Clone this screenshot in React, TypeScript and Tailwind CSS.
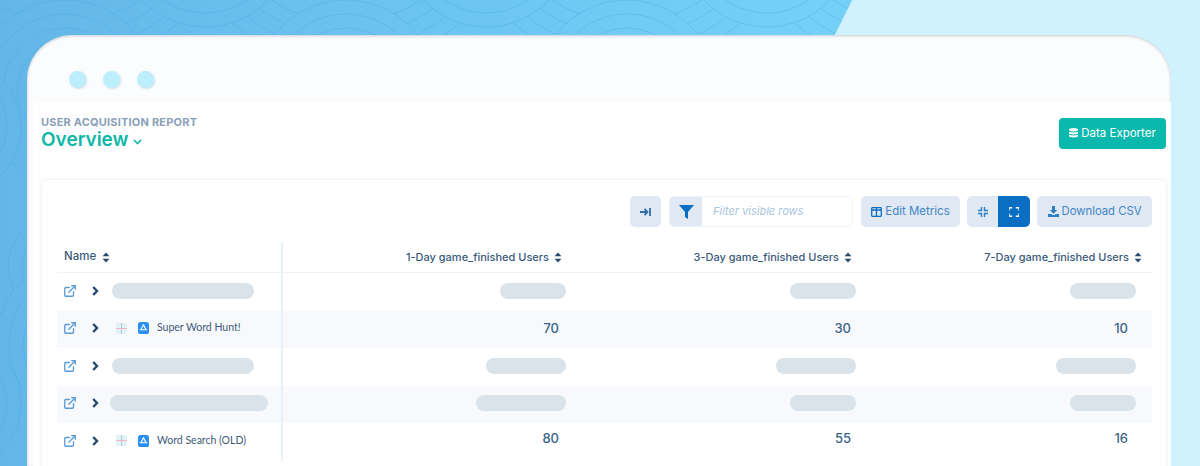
import React from "react";
import { ExternalLink } from "lucide-react";

const mont = "font-['Inter','Liberation_Sans',sans-serif]";

function Sort() {
  return (
    <svg width="8" height="11" viewBox="0 0 8 11" fill="#27496d">
      <path d="M4 0.5 L7.5 4.3 H0.5 Z" />
      <path d="M4 10.5 L7.5 6.7 H0.5 Z" />
    </svg>
  );
}

const ringSets: [number, number, number[]][] = [
  [65, -110, [175, 161, 147, 133]],
  [346, -110, [175, 161, 147, 133]],
  [627, -110, [175, 161, 147, 133]],
  [908, -110, [175, 161, 147, 133]],
  [205, -60, [87, 73, 59]],
  [486, -60, [87, 73, 59]],
  [767, -60, [87, 73, 59]],
  [65, 90, [90, 76, 62, 48]],
  [346, 90, [90, 76, 62, 48]],
  [627, 90, [90, 76, 62, 48]],
  [-47, 127, [68, 54, 40]],
  [60, 267, [52, 38, 24]],
  [85, 345, [90, 76, 62]],
  [-47, 403, [68, 54, 40]],
];

function Backdrop() {
  return (
    <svg className="absolute inset-0" width="1200" height="466" viewBox="0 0 1200 466">
      <defs>
        <linearGradient id="bg" gradientUnits="userSpaceOnUse" x1="0" x2="850" y1="0" y2="0">
          <stop offset="0" stopColor="#63b7e8" />
          <stop offset="1" stopColor="#75d1f8" />
        </linearGradient>
        <clipPath id="c"><path d="M0 0H852L620 466H0Z" /></clipPath>
      </defs>
      <rect width="1200" height="466" fill="#d0f2ff" />
      <g clipPath="url(#c)">
        <rect width="1200" height="466" fill="url(#bg)" />
        {ringSets.map(([x, y, rs], i) => (
          <g key={i}>
            {rs.map((r, j) => (
              <circle key={r} cx={x} cy={y} r={r} fill={j === 0 ? "url(#bg)" : "none"} stroke="#3f9fd8" strokeOpacity="0.28" strokeWidth="1" />
            ))}
          </g>
        ))}
      </g>
    </svg>
  );
}

function AppIcon() {
  return (
    <svg width="11" height="12" viewBox="0 0 11 12">
      <rect width="11" height="12" rx="2.6" fill="#2a8ff0" />
      <path d="M5.5 2.8 L3 7.6 M5.5 2.8 L8 7.6 M2.2 7.8 H8.8" stroke="#fff" strokeWidth="1.1" fill="none" strokeLinecap="round" />
    </svg>
  );
}

function Thumb() {
  return (
    <div className="relative w-[11px] h-[11px] bg-[#e2f3f6]">
      <div className="absolute left-[5px] top-0 w-px h-full bg-[#b4c2dc]" />
      <div className="absolute left-0 top-[5px] w-full h-px bg-[#f2b3c4]" />
    </div>
  );
}

type Row = {
  bar?: string;
  name?: string;
  bars?: string[];
  vals?: number[];
  alt?: boolean;
  up?: boolean;
};

const rows: Row[] = [
  { bar: "w-[142px] ml-[13px]", bars: ["w-[66px]", "w-[66px]", "w-[66px]"] },
  { name: "Super Word Hunt!", vals: [70, 30, 10], alt: true },
  { bar: "w-[142px] ml-[13px]", bars: ["w-[80px]", "w-[80px]", "w-[80px]"] },
  { bar: "w-[158px] ml-[11px]", bars: ["w-[90px]", "w-[66px]", "w-[66px]"], alt: true },
  { name: "Word Search (OLD)", vals: [80, 55, 16], up: true },
];

const colW = ["w-[283px]", "w-[290px]", "w-[280px]"];
const valPr = ["pr-[7px]", "pr-[5px]", "pr-[8px]"];

function TableRow({ r }: { r: Row }) {
  return (
    <div className={`flex items-center h-[37.5px] ${r.alt ? "bg-[#f7f9fc]" : ""}`}>
      <div className="w-[226px] shrink-0 flex items-center border-r-2 border-[#e8f1f9] h-full pl-[6px] pb-[2px]">
        <ExternalLink size={14} strokeWidth={2.3} color="#5b9bd5" />
        <svg width="7" height="10" viewBox="0 0 7 10" className="ml-[15px]" fill="none" stroke="#27496d" strokeWidth="2.4"><path d="M1.2 1l3.8 4-3.8 4" /></svg>
        {r.bar ? (
          <div className={`h-4 rounded-full bg-[#dbe3ea] ${r.bar}`} />
        ) : (
          <div className="flex items-center ml-[17px]">
            <Thumb />
            <div className="ml-[11px]"><AppIcon /></div>
            <span className="ml-[8px] text-[10.5px] text-[#3d5a78] font-['Lato',sans-serif] whitespace-nowrap">{r.name}</span>
          </div>
        )}
      </div>
      {[0, 1, 2].map((i) => (
        <div key={i} className={`flex items-center justify-end shrink-0 ${colW[i]} ${r.vals ? valPr[i] : ""} ${r.up ? "-mt-[6px]" : "mb-[2px]"}`}>
          {r.bars ? (
            <div className={`h-4 rounded-full bg-[#dbe3ea] ${r.bars[i]}`} />
          ) : (
            <span className={`${mont} text-[13px] font-medium text-[#3a6488]`}>{r.vals![i]}</span>
          )}
        </div>
      ))}
    </div>
  );
}

const Btn = ({ children, className = "" }: { children: React.ReactNode; className?: string }) => (
  <div className={`h-[31px] rounded-[5px] bg-[#dfe8f3] flex items-center justify-center text-[#4286c6] ${className}`}>{children}</div>
);

export default function App() {
  return (
    <div className={`relative w-[1200px] h-[466px] overflow-hidden ${mont}`}>
      <Backdrop />
      <div className="relative ml-[27px] mt-[35px] w-[1144px] h-[431px] rounded-tl-[45px] rounded-tr-[45px] bg-[#fafcfe] shadow-[inset_0_1px_3px_rgba(110,115,125,0.35)] overflow-hidden">
        <div className="h-[67px] flex items-end gap-[17px] pl-[42px] pb-[14px]">
          {[0, 1, 2].map((i) => (
            <div key={i} className="w-[17px] h-[17px] rounded-full bg-[#bdeefb] shadow-[1px_1px_2px_rgba(120,170,190,0.35)]" />
          ))}
        </div>
        <div className="ml-[6px] h-[364px] bg-white">
          <div className="flex justify-between pl-[8px] pr-[5px] h-[78px]">
            <div className="pt-[13px]">
              <div className="text-[11px] leading-[14px] font-bold text-[#8a9fb8] tracking-[0.2px]">USER ACQUISITION REPORT</div>
              <div className="flex items-center text-[#0eb8a8] -mt-[1px]">
                <span className="text-[19px] leading-[24px] font-semibold">Overview</span>
                <svg width="9" height="6" viewBox="0 0 9 6" className="ml-[4px] mt-[3px]" fill="none" stroke="#0eb8a8" strokeWidth="1.6"><path d="M1 1l3.5 3.5L8 1" /></svg>
              </div>
            </div>
            <div className="mt-[16px] w-[107px] h-[31px] rounded-[4px] bg-[#0bb8ad] text-white text-[11.5px] flex items-center justify-center gap-[3px]">
              <svg width="9" height="11" viewBox="0 0 9 11" fill="#fff">
                <ellipse cx="4.5" cy="1.8" rx="4.5" ry="1.7" />
                <path d="M0 3.2c1 1.2 8 1.2 9 0v1.7c-.6 1.6-8.4 1.6-9 0zM0 6.2c1 1.2 8 1.2 9 0v1.7c-.6 1.6-8.4 1.6-9 0z" transform="translate(0 .3)" />
              </svg>
              Data Exporter
            </div>
          </div>
          <div className="ml-[9px] mr-[5px] h-[290px] rounded-t-[6px] bg-white shadow-[0_0_4px_#dfeaf6] pt-[16px] pl-[15px] pr-[14px]">
            <div className="flex justify-end items-center h-[31px]">
              <Btn className="w-[31px]">
                <svg width="11" height="10" viewBox="0 0 11 10" fill="none" stroke="#2f6fa8" strokeWidth="1.8"><path d="M0 5h7M4.5 2l3 3-3 3" /><path d="M10 1v8" /></svg>
              </Btn>
              <div className="ml-[8px] flex h-[31px] w-[184px] rounded-[5px] border border-[#eef3f9] overflow-hidden">
                <div className="w-[32px] bg-[#dfe8f3] flex items-center justify-center">
                  <svg width="15" height="14" viewBox="0 0 15 14" fill="#0a6fc2"><path d="M0 0h15L9 7v7L6 12V7z" /></svg>
                </div>
                <span className="pl-[11px] self-center italic text-[11px] text-[#a9c4dd]">Filter visible rows</span>
              </div>
              <Btn className="ml-[8px] w-[99px] text-[11.5px] gap-[3px]">
                <svg width="11" height="10" viewBox="0 0 11 10" fill="none" stroke="#0a6fc2" strokeWidth="1.3"><rect x=".7" y=".7" width="9.6" height="8.6" rx=".8" /><path d="M5.5 1v8M.7 3h9.6" /></svg>
                Edit Metrics
              </Btn>
              <div className="ml-[7px] flex h-[31px] w-[63px] rounded-[5px] overflow-hidden">
                <div className="w-[31px] bg-[#dfe8f3] flex items-center justify-center">
                  <svg width="10" height="10" viewBox="0 0 10 10" fill="none" stroke="#2b7fc4" strokeWidth="1.4"><path d="M3.5 0v3.5H0M6.5 0v3.5H10M3.5 10V6.5H0M6.5 10V6.5H10" /></svg>
                </div>
                <div className="w-[32px] bg-[#0a6fc2] flex items-center justify-center">
                  <svg width="10" height="10" viewBox="0 0 10 10" fill="none" stroke="#fff" strokeWidth="1.4"><path d="M0 3.5V.7h3.2M10 3.5V.7H6.8M0 6.5v2.8h3.2M10 6.5v2.8H6.8" /></svg>
                </div>
              </div>
              <Btn className="ml-[7px] w-[115px] text-[11.3px] gap-[3px]">
                <svg width="11" height="11" viewBox="0 0 11 11" fill="#2f7fc4"><path d="M4 0h3v4h2.3L5.5 7.8 1.7 4H4z" /><path d="M0 8h3.2l1.2 1h2.2l1.2-1H11v3H0z" /></svg>
                Download CSV
              </Btn>
            </div>
            <div className="mt-[15px] flex items-center h-[31px] border-b border-[#eef3f9] text-[11px] font-medium text-[#38597a]">
              <div className="w-[226px] shrink-0 h-full border-r-2 border-[#e8f1f9] flex items-center pl-[7px] gap-[6px] text-[11.5px]">Name <Sort /></div>
              <div className="w-[279px] shrink-0 flex items-center justify-end gap-[5px]">1-Day game_finished Users <Sort /></div>
              <div className="w-[290px] shrink-0 flex items-center justify-end gap-[5px]">3-Day game_finished Users <Sort /></div>
              <div className="w-[290px] shrink-0 flex items-center justify-end gap-[5px]">7-Day game_finished Users <Sort /></div>
            </div>
            {rows.map((r, i) => <TableRow key={i} r={r} />)}
          </div>
        </div>
      </div>
    </div>
  );
}
